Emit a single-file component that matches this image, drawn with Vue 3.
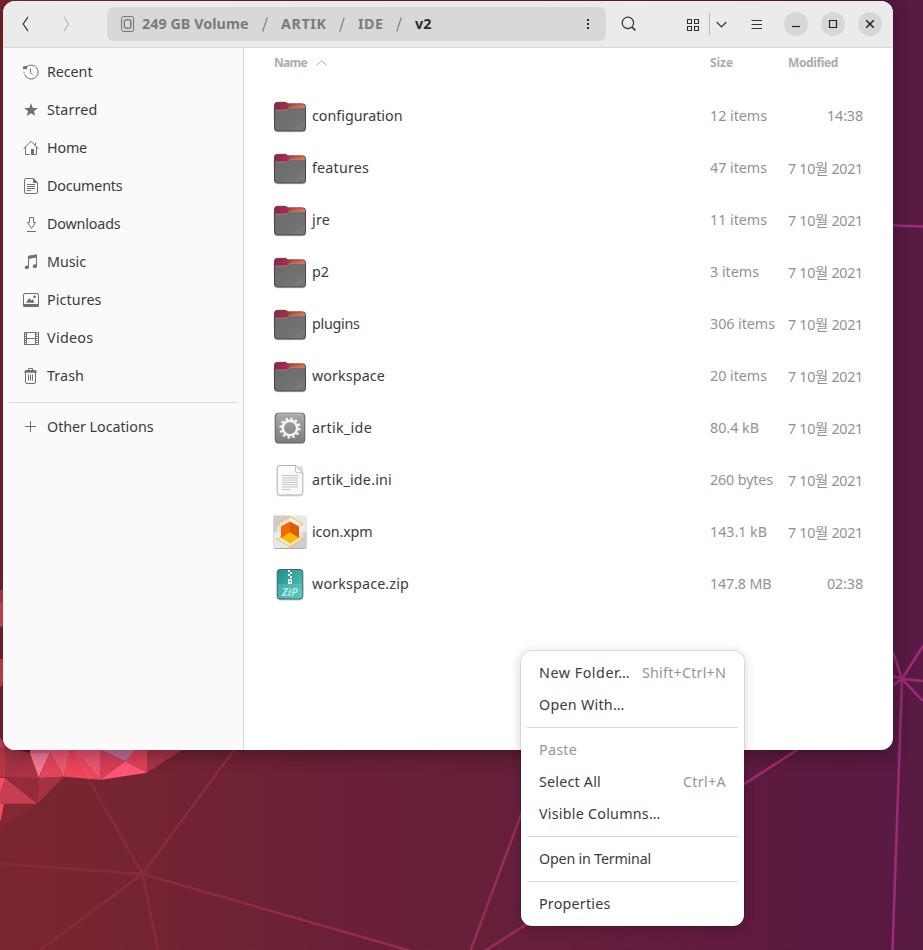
<script setup>
const places = [
  { name: 'Recent', icon: 'recent', w: 45.5 },
  { name: 'Starred', icon: 'star', w: 50.5 },
  { name: 'Home', icon: 'home', w: 40 },
  { name: 'Documents', icon: 'doc', w: 75.5 },
  { name: 'Downloads', icon: 'down', w: 73.5 },
  { name: 'Music', icon: 'music', w: 39 },
  { name: 'Pictures', icon: 'pic', w: 54.5 },
  { name: 'Videos', icon: 'video', w: 46.5 },
  { name: 'Trash', icon: 'trash', w: 37 },
]

const day = '7 10월 2021'
const files = [
  { name: 'configuration', w: 90.5, type: 'folder', size: '12 items', sw: 57, date: '14:38' },
  { name: 'features', w: 57, type: 'folder', size: '47 items', sw: 57, date: day },
  { name: 'jre', w: 18, type: 'folder', size: '11 items', sw: 57, date: day },
  { name: 'p2', w: 17, type: 'folder', size: '3 items', sw: 49, date: day },
  { name: 'plugins', w: 47.5, type: 'folder', size: '306 items', sw: 65, date: day },
  { name: 'workspace', w: 73, type: 'folder', size: '20 items', sw: 57, date: day },
  { name: 'artik_ide', w: 60, type: 'exec', size: '80.4 kB', sw: 49, date: day },
  { name: 'artik_ide.ini', w: 80, type: 'text', size: '260 bytes', sw: 63, date: day },
  { name: 'icon.xpm', w: 60.5, type: 'image', size: '143.1 kB', sw: 57, date: day },
  { name: 'workspace.zip', w: 97, type: 'zip', size: '147.8 MB', sw: 61.5, date: '02:38' },
]

const menu = [
  [
    { name: 'New Folder…', w: 91, key: 'Shift+Ctrl+N', kw: 84 },
    { name: 'Open With…', w: 85.5 },
  ],
  [
    { name: 'Paste', w: 38, off: true },
    { name: 'Select All', w: 62, key: 'Ctrl+A', kw: 43 },
    { name: 'Visible Columns…', w: 121.5 },
  ],
  [{ name: 'Open in Terminal', w: 112 }],
  [{ name: 'Properties', w: 71.5 }],
]

// Tracks a label so that it fills the given advance width.
const vFit = {
  mounted(el, { value }) {
    const natural = el.getBoundingClientRect().width
    const count = el.textContent.trim().length
    el.style.letterSpacing = (value - natural) / count + 'px'
  },
}
</script>

<template>
  <div class="desktop">
    <svg class="wallpaper" viewBox="0 0 923 950" aria-hidden="true">
      <defs>
        <linearGradient id="bg" x1="0" y1="0" x2="1" y2="0">
          <stop offset="0" stop-color="#7a2630" />
          <stop offset=".17" stop-color="#742432" />
          <stop offset=".35" stop-color="#6a2036" />
          <stop offset=".55" stop-color="#661f3a" />
          <stop offset=".72" stop-color="#621c3d" />
          <stop offset=".88" stop-color="#5b1a40" />
          <stop offset="1" stop-color="#591a44" />
        </linearGradient>
        <linearGradient id="ln" gradientUnits="userSpaceOnUse" x1="0" y1="0" x2="923" y2="0">
          <stop offset="0" stop-color="#842a38" />
          <stop offset=".2" stop-color="#8a2b40" />
          <stop offset=".36" stop-color="#932c4c" />
          <stop offset=".6" stop-color="#962e5c" />
          <stop offset="1" stop-color="#9c2c78" />
        </linearGradient>
      </defs>
      <rect width="923" height="950" fill="url(#bg)" />
      <g stroke="url(#ln)" stroke-width="2.5" fill="none">
        <path d="M72 750 142.500 874 234 750M0 863.500 142.500 874 40 950M142.500 874 158 950M142.500 874 411 951" />
        <path d="M545 750 470 952M480 954 797 750 902 679M893 652 902 679 923 646M890 675 902 679 923 681M902 679 923 701M902 679 892.500 950" />
        <path d="M880 225 923 226.600" />
      </g>
      <g transform="translate(0 560) scale(.33333)">
        <path fill="#e04a65" d="M0 92 12 85V200H0z" />
        <path fill="#c13d50" d="M0 92 12 85V128H0z" />
        <path fill="#d94257" d="M0 297H12V368L0 382z" />
        <path fill="#d0425a" d="M0 530 18 565H0z" />
        <path fill="#b83548" d="M0 562H15V652H0z" />
        <path fill="#611c2a" d="M30 560H92V580z" />
        <path fill="#a33344" d="M15 562 92 580 15 652z" />
        <path fill="#a93343" d="M92 580 116 654 15 652z" />
        <path fill="#ea5873" d="M90 560H215V580H90z" />
        <path fill="#f47b9c" d="M90 580 150 578 116 652z" />
        <path fill="#e3455c" d="M150 578 192 650 116 654z" />
        <path fill="#ed5a72" d="M150 578 213 560 192 650z" />
        <path fill="#cd72ab" d="M148 560H178L150 578z" />
        <path fill="#ee445c" d="M210 560 192 650 302 659z" />
        <path fill="#ec5471" d="M210 560H302V659z" />
        <path fill="#d63f58" d="M302 570 376 603 302 659z" />
        <path fill="#c66d9d" d="M290 565H418L376 603z" />
        <path fill="#ff5678" d="M302 659 376 603 441 638z" />
        <path fill="#df4159" d="M376 603 415 560H441V638z" />
        <path fill="#a93349" d="M441 560H560L441 638z" />
        <path fill="#c63e4f" d="M0 654H15L112 731H0z" />
        <path fill="#952b39" d="M15 654H115L112 731z" />
        <path fill="#a33140" d="M115 654 192 650 112 731z" />
        <path fill="#f84a5e" d="M0 654H16L0 695zM0 732H12L2 782H0z" />
        <path fill="#842934" d="M12 732H112L0 805z" />
        <path stroke="#f24f66" stroke-width="5" d="M220 565 268 655" />
      </g>
    </svg>

    <main class="window">
      <header class="bar">
        <svg class="nav" viewBox="0 0 46 16"><path d="M6 .8 1.200 8 6 15.200" stroke="#333" /><path d="M42 .8 46.500 8 42 15.200" stroke="#b4b4b4" /></svg>
        <div class="path">
          <svg class="disk" viewBox="0 0 14 16"><rect x=".6" y=".6" width="12" height="14.800" rx="1.800" /><rect x="3.500" y="4" width="6.200" height="8" rx="1" /><path d="M2.500 5h1M2.500 7h1M2.500 9h1M2.500 11h1M9.700 5h1M9.700 7h1M9.700 9h1M9.700 11h1M4.500 3v1M6.600 3v1M8.700 3v1M4.500 12v1M6.600 12v1M8.700 12v1" /></svg>
          <span class="cell vol"><b v-fit="106.5">249 GB Volume</b></span>
          <svg class="slash" viewBox="0 0 6 15"><path d="M.7 14.500 5.300.5" /></svg>
          <span class="cell artik"><b v-fit="45.5">ARTIK</b></span>
          <svg class="slash" viewBox="0 0 6 15"><path d="M.7 14.500 5.300.5" /></svg>
          <span class="cell ide"><b v-fit="25.5">IDE</b></span>
          <svg class="slash" viewBox="0 0 6 15"><path d="M.7 14.500 5.300.5" /></svg>
          <span class="cell here"><b v-fit="16.5">v2</b></span>
          <svg class="dots" viewBox="0 0 2 10"><path d="M0 0h2v2H0zM0 4h2v2H0zM0 8h2v2H0z" /></svg>
        </div>
        <svg class="search" viewBox="0 0 16 16"><circle cx="6.900" cy="6.900" r="5.700" /><path d="m11 11 3.300 3.300" stroke-width="1.700" /></svg>
        <svg class="grid" viewBox="0 0 13 13"><path d="M1.500 1.500h4v4h-4zM8.500 1.500h4v4h-4zM1.500 8.500h4v4h-4zM8.500 8.500h4v4h-4z" /></svg>
        <i class="split"></i>
        <svg class="chev" viewBox="0 0 11 7"><path d="M.7 1 5.500 5.800 10.300 1" /></svg>
        <svg class="burger" viewBox="0 0 11 11"><path d="M.5 1.500H11M.5 5.500H11M.5 9.500H11" /></svg>
        <div class="controls">
          <button aria-label="Minimize"><svg viewBox="0 0 24 24"><path d="M8 14.500h8" stroke-width="1.200" /></svg></button>
          <button aria-label="Maximize"><svg viewBox="0 0 24 24"><path d="M8.500 8.500h7v7h-7z" stroke-width="1.200" /></svg></button>
          <button aria-label="Close"><svg viewBox="0 0 24 24"><path d="m8.200 8.200 7.600 7.600M15.800 8.200l-7.600 7.600" stroke-width="1.500" /></svg></button>
        </div>
      </header>

      <div class="body">
        <aside>
          <div v-for="p in places" :key="p.name" class="place">
            <svg class="pi" viewBox="0 0 16 16">
              <g v-if="p.icon === 'recent'"><path d="M3.200 3.100A7 7 0 1 1 1.500 10.300" /><path d="M1 7.900v1.200" /><path d="M7.500 4.500v4.200l2 2" /><path class="solid" d="M0 2.500 4.300 1.800 3.800 5.300 0 5z" /></g>
              <path v-else-if="p.icon === 'star'" class="solid" d="m8 1.200 1.800 4.700 5 .2-3.900 3.100 1.400 4.900L8 11.300l-4.300 2.800 1.400-4.900-3.900-3.100 5-.2z" />
              <g v-else-if="p.icon === 'home'"><path d="M.6 8.700 8 1.300l7.400 7.400M2.500 7v7.500h4M10 14.500h3.500V7M12.500 2.500v3" /><path class="solid" d="M8 9h3v6H8z" /></g>
              <g v-else-if="p.icon === 'doc'"><path d="M3 .5h7.500l4 4V14a1.500 1.500 0 0 1-1.500 1.500H3A1.500 1.500 0 0 1 1.500 14V2A1.500 1.500 0 0 1 3 .5zM4 6.500h8M4 8.500h8M4 10.500h8M4 12.500h4" /><path class="solid" d="M10 .5v4.500h4.500z" /></g>
              <path v-else-if="p.icon === 'down'" d="M6.500 1.500h4v5h2l-4 6-4-6h2zM4 15.500h9" />
              <g v-else-if="p.icon === 'music'"><path d="M5.500 13V2.300l8-1.300v11" /><path class="solid" d="M5 2 14 .500v3L5 5z" /><ellipse class="solid" cx="3.900" cy="13.300" rx="2.100" ry="1.900" /><ellipse class="solid" cx="11.900" cy="12.200" rx="2.100" ry="1.900" /></g>
              <g v-else-if="p.icon === 'pic'"><rect x=".5" y="1.500" width="15" height="12.500" rx="1.500" /><path class="solid" d="M0 12h16v1.500a1.500 1.500 0 0 1-1.500 1.500h-13A1.500 1.500 0 0 1 0 13.500zM3 10.800 6.200 6l2 2.500L9.500 7l2.200 3.800z" /><circle class="solid" cx="11.500" cy="4.800" r="1.400" /></g>
              <g v-else-if="p.icon === 'video'"><path d="M3.500 2.500h9v12h-9zM3.500 8.500h9M1.500 2v13M15.500 2v13" /><path stroke-dasharray="1 1" stroke-width="1.800" d="M2.500 2v13M13.800 2v13" /></g>
              <g v-else><path d="M2.500 4.500v9.500a1.500 1.500 0 0 0 1.500 1.500h7a1.500 1.500 0 0 0 1.500-1.500V4.500M5.500 2V.500h4V2M5.500 6.500v6M7.500 6.500v6M9.500 6.500v6" /><path class="solid" d="M2.500 2h10l2 2.800H.8z" /></g>
            </svg>
            <span v-fit="p.w">{{ p.name }}</span>
          </div>
          <hr>
          <div class="place">
            <svg class="pi" viewBox="0 0 16 16"><path d="M2 7.500h11M7.500 2v11" /></svg>
            <span v-fit="106.5">Other Locations</span>
          </div>
        </aside>

        <section>
          <div class="cols">
            <div class="namecol"><b v-fit="33">Name</b><svg viewBox="0 0 11 6"><path d="M.5 5.500 5.500.700l5 4.800" /></svg></div>
            <div><b v-fit="23">Size</b></div>
            <div><b v-fit="50">Modified</b></div>
          </div>
          <div v-for="f in files" :key="f.name" class="file">
            <svg class="fi" viewBox="0 0 34 34">
              <defs>
                <linearGradient id="fold" x1="0" y1="0" x2="1" y2="1"><stop offset="0" stop-color="#696969" /><stop offset=".75" stop-color="#747474" /><stop offset=".76" stop-color="#797979" /><stop offset="1" stop-color="#767676" /></linearGradient>
                <linearGradient id="tab"><stop offset="0" stop-color="#862849" /><stop offset=".4" stop-color="#a62d45" /><stop offset=".6" stop-color="#cf4f3d" /><stop offset="1" stop-color="#f07238" /></linearGradient>
                <linearGradient id="ex" x1="0" y1="0" x2="0" y2="1"><stop offset="0" stop-color="#aaa" /><stop offset="1" stop-color="#7d7d7d" /></linearGradient>
                <linearGradient id="zp" x1="0" y1="0" x2="1" y2="1"><stop offset="0" stop-color="#248b8d" /><stop offset="1" stop-color="#58cbbf" /></linearGradient>
              </defs>
              <g v-if="f.type === 'folder'">
                <rect x="1" y="5" width="32" height="28.200" rx="3" fill="#000" opacity=".2" />
                <path fill="url(#tab)" stroke="#5d3345" stroke-width=".8" d="M1.400 6a3 3 0 0 1 3-2.700h7.800c2 0 1.600 1.500 3.500 1.500H29.500a3 3 0 0 1 3 3V20H1.400z" />
                <path fill="url(#fold)" d="M1.500 11h11.500c2 0 2-2.500 4.500-2.500h14a1 1 0 0 1 1 1V29a3 3 0 0 1-3 3h-25a3 3 0 0 1-3-3z" />
                <path fill="none" stroke="#50404a" d="M1.500 9V29a3 3 0 0 0 3 3h25a3 3 0 0 0 3-3V9" />
                <path fill="none" stroke="#989898" stroke-width=".7" d="M2.300 11h10.900c2 0 2-2.500 4-2.500H31.700" />
              </g>
              <g v-else-if="f.type === 'exec'">
                <rect x="2" y="3" width="30" height="30" rx="3.500" fill="#000" opacity=".2" />
                <rect x="2.200" y="2.200" width="29.600" height="29.600" rx="3" fill="url(#ex)" stroke="#606060" />
                <path d="M4.500 3.200h25" stroke="#c5c5c5" fill="none" />
                <circle cx="17" cy="17" r="9.300" fill="none" stroke="#f4f4f2" stroke-width="2.600" stroke-dasharray="2.430 2.439" />
                <circle cx="17" cy="17" r="7.200" fill="none" stroke="#f4f4f2" stroke-width="2.500" />
              </g>
              <g v-else-if="f.type === 'text'">
                <rect x="4" y="3" width="26" height="30.500" rx="3" fill="#000" opacity=".12" />
                <path fill="#fafafa" stroke="#a8a8a8" stroke-width=".9" d="M7 2.500h15.500l7.300 7.300V29.500a2.500 2.500 0 0 1-2.500 2.500H6.700a2.500 2.500 0 0 1-2.500-2.500V5a2.500 2.500 0 0 1 2.500-2.500z" />
                <path fill="#fff" stroke="#b0b0b0" stroke-width=".8" d="M22.500 2.500V8a1.800 1.800 0 0 0 1.800 1.800h5.500z" />
                <path stroke="#c4c4c4" stroke-width="1" fill="none" d="M9 12.500h16M9 14.800h16M9 17.100h16M9 19.400h16M9 21.700h16M9 24h16M9 26.500h8" />
              </g>
              <g v-else-if="f.type === 'image'">
                <rect x=".5" y="1" width="33" height="33" rx="2" fill="#aaa" />
                <rect x=".5" y=".5" width="33" height="32.500" rx="1.500" fill="#e9e9e9" />
                <path fill="#cecece" d="M.5.500H17V17H.5zM17 17h16.500v16H17z" />
                <path fill="#f2f2f2" d="M17 1.500 30 9v15l-13 8-13-8V9z" opacity=".6" />
                <path fill="#f86700" d="M17 6.500 8 11.500v12l9-6z" /><path fill="#dc5d00" d="m17 6.500 9 5v12l-9-6z" /><path fill="#ffba00" d="m17 17.500 9 5.500-9 5.500L8 23z" />
                <path fill="none" stroke="#f5b400" stroke-width="1.200" stroke-dasharray="1.200 1" d="m4 9 13-7.500L30 9l-4.500 2.500M4 9l4 2.500M8 21.500 4 24l13 8 13-8-4-2.500" />
              </g>
              <g v-else>
                <rect x="4" y="3" width="26" height="30.500" rx="3" fill="#000" opacity=".2" />
                <rect x="4.200" y="2.500" width="25.600" height="29.500" rx="2.800" fill="url(#zp)" stroke="#39696c" />
                <path fill="#68d4c5" opacity=".3" d="M5 17h24v14H5z" />
                <path fill="#fff" d="M15 3h2v2h-2zM17 5h2v2h-2zM15 7h2v2h-2zM17 9h2v2h-2zM15 12h4v5h-4z" /><path fill="#2b8f92" d="M16.300 13.500h1.500v1.800h-1.500z" />
                <text x="9" y="28.500" class="ziptext" textLength="15.500" lengthAdjust="spacingAndGlyphs">ZiP</text>
              </g>
            </svg>
            <div><span v-fit="f.w">{{ f.name }}</span></div>
            <div class="dim"><span v-fit="f.sw">{{ f.size }}</span></div>
            <div class="dim date" :class="{ day: f.date === day }"><span v-fit="f.date === day ? 75 : 36">{{ f.date }}</span></div>
          </div>
        </section>
      </div>
    </main>

    <nav class="menu">
      <div v-for="(group, i) in menu" :key="i" class="group">
        <div v-for="m in group" :key="m.name" class="item" :class="{ off: m.off }">
          <span v-fit="m.w">{{ m.name }}</span>
          <span v-if="m.key" v-fit="m.kw" class="key">{{ m.key }}</span>
        </div>
      </div>
    </nav>
  </div>
</template>

<style>
body { margin: 0; overflow: hidden; }
</style>

<style scoped>
* { box-sizing: border-box; }
.desktop {
  position: relative; width: 923px; height: 950px; overflow: hidden; padding: 1px 0 0 3px;
  font: 14.3px/20px "Noto Sans", "Noto Sans CJK KR", sans-serif; color: #3b3b3b;
}
svg { display: block; flex: none; fill: none; }
span, b { display: inline-block; white-space: nowrap; }
.wallpaper { position: absolute; left: 0; top: 0; width: 923px; height: 950px; }
.window {
  position: relative; width: 890px; height: 749px; border-radius: 12px; background: #fff;
  box-shadow: 0 3px 18px 2px rgba(0, 0, 0, .32); display: flex; flex-direction: column;
}
.bar {
  height: 47px; flex: none; background: #ebebeb; border-bottom: 1px solid #d7d7d7;
  border-radius: 12px 12px 0 0; display: flex; align-items: center; padding-left: 19px;
}
.nav { width: 46px; height: 16px; stroke-width: 1.2; margin-right: 39px; overflow: visible; }
.path {
  width: 499px; height: 34px; background: #d8d8d8; border-radius: 7px;
  display: flex; align-items: center; padding-left: 14px; color: #7b7b7b; font-size: 14.3px;
}
.disk { width: 14px; height: 16px; stroke: #707070; margin-right: 7px; }
.cell { flex: none; }
.vol { width: 120px; }
.artik { width: 58px; }
.ide { width: 38px; }
.here { width: 172px; color: #2c2c2c; }
.slash { width: 6px; height: 15px; stroke: #878787; stroke-width: 1.3; margin-right: 13px; }
.dots { width: 2px; height: 10px; fill: #333; }
.search { width: 16px; height: 16px; margin-left: 15px; stroke: #333; stroke-width: 1.2; }
.grid { width: 13px; height: 13px; margin-left: 49px; stroke: #333; stroke-width: 1.1; overflow: visible; }
.split { width: 1px; height: 22px; background: #b8b8b8; margin-left: 10px; }
.chev { width: 11px; height: 7px; stroke: #333; stroke-width: 1.2; margin-left: 6px; }
.burger { width: 11px; height: 11px; stroke: #333; margin-left: 24px; }
.controls { display: flex; gap: 13px; margin-left: 22px; }
button { width: 24px; height: 24px; padding: 0; border: 0; border-radius: 50%; background: #d7d7d7; }
button svg { width: 24px; height: 24px; stroke: #222; }
.body { display: flex; flex: 1; min-height: 0; }
aside { width: 241px; background: #fafafa; border-right: 1px solid #d9d9d9; border-radius: 0 0 0 12px; padding-top: 5px; }
.place { height: 38px; display: flex; align-items: center; padding-left: 20px; gap: 8px; }
.pi { width: 16px; height: 16px; stroke: #707070; }
.pi .solid { fill: #707070; stroke: none; }
hr { border: 0; height: 1px; background: #dadada; margin: 7px 6px 5px; }
section { flex: 1; padding-left: 29px; }
.cols { display: grid; grid-template-columns: 436px 78px 75px; height: 29px; margin: 0 0 13px 1px; align-items: center; font-size: 12px; color: #acacac; }
.namecol { display: flex; align-items: center; gap: 9px; }
.namecol svg { width: 11px; height: 6px; stroke: #aaa; }
.file { display: grid; grid-template-columns: 39px 398px 78px 75px; height: 52px; align-items: center; }
.fi { width: 34px; height: 34px; }
.dim { color: #929292; }
.date { text-align: right; }
.day { padding-top: 2px; }
.ziptext { font: italic bold 10px "Noto Sans", sans-serif; fill: #b5e9e1; }
.menu {
  position: absolute; left: 521px; top: 651px; width: 223px; height: 275px; padding: 6px;
  background: #fff; border-radius: 11px; box-shadow: 0 0 0 1px rgba(0, 0, 0, .08), 0 2px 12px rgba(0, 0, 0, .2);
}
.group + .group { border-top: 1px solid #dadada; margin-top: 6px; padding-top: 6px; }
.item { height: 32px; padding: 0 12px; display: flex; align-items: center; justify-content: space-between; }
.off, .key { color: #959595; }
</style>
